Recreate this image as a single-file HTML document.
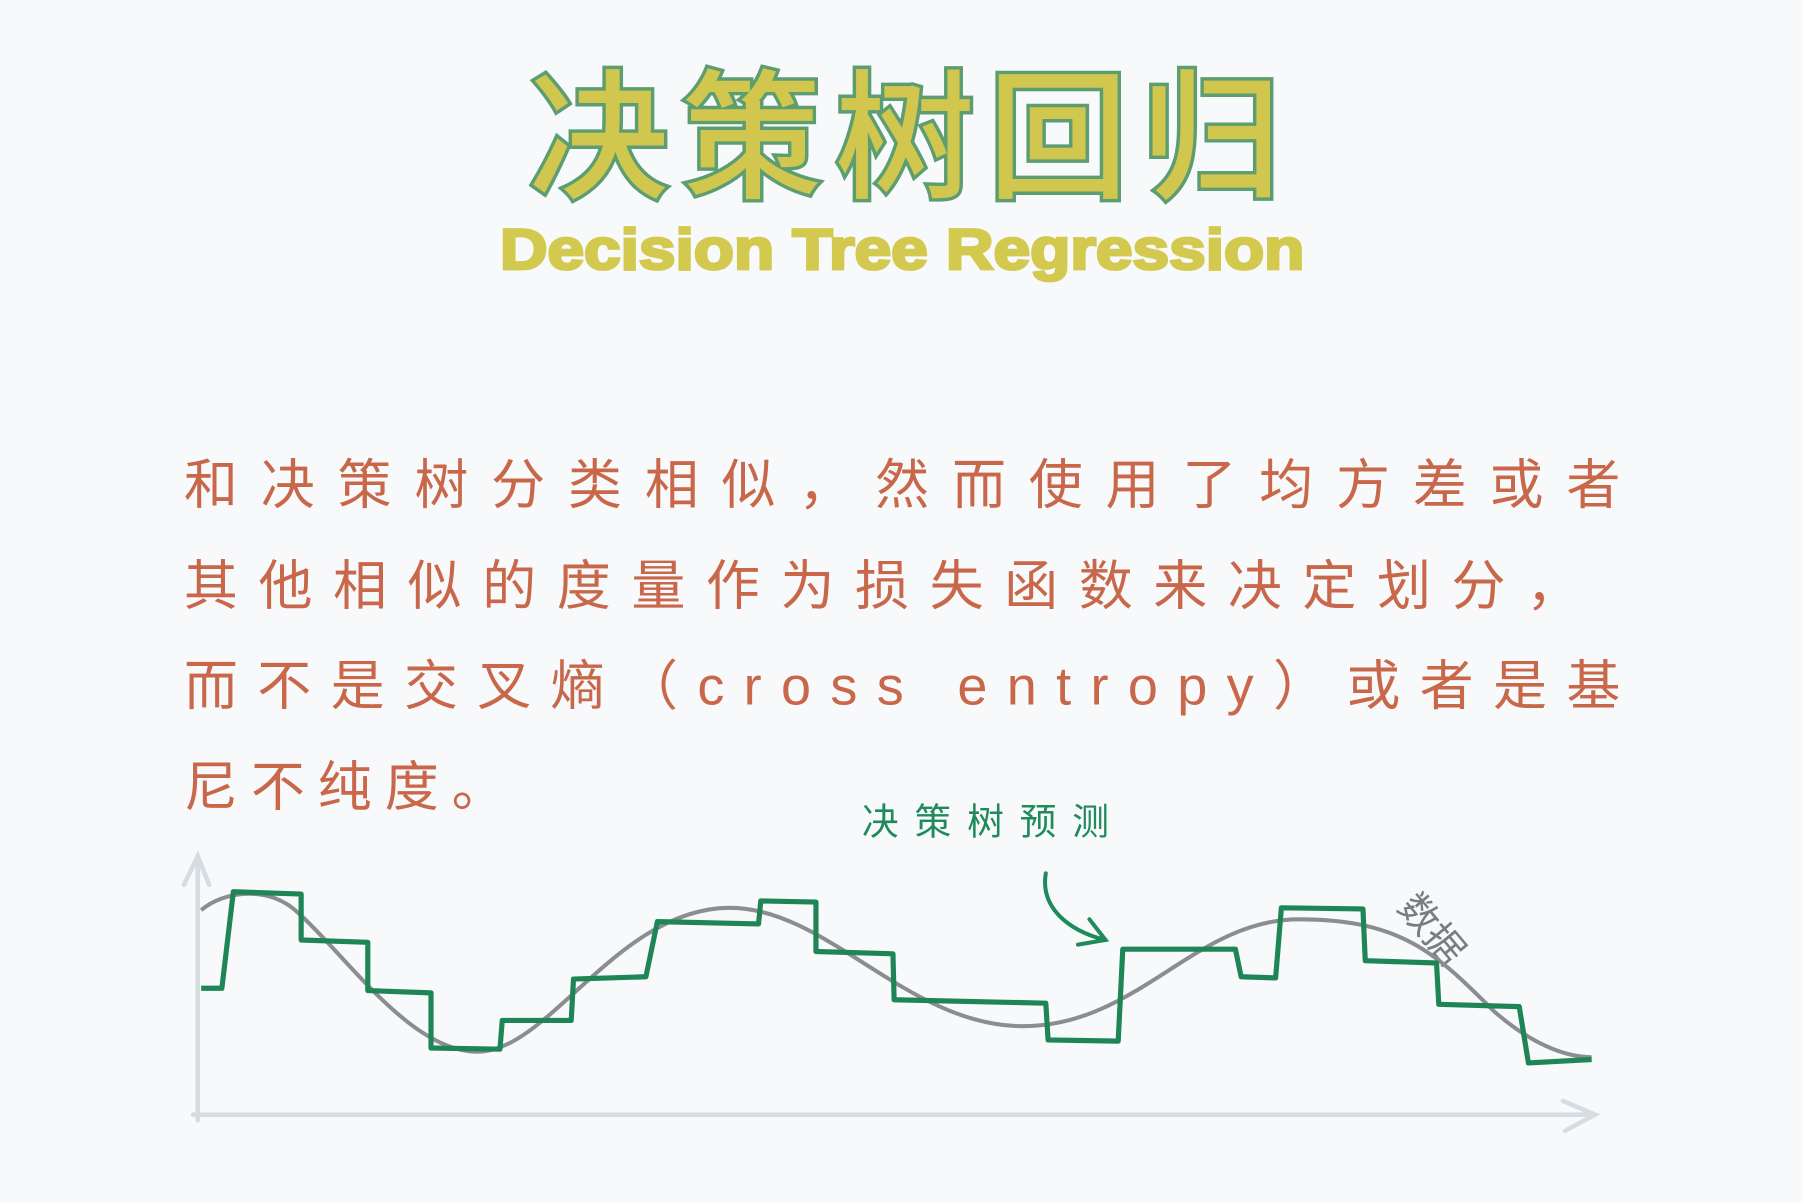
<!DOCTYPE html>
<html><head><meta charset="utf-8"><style>
html,body{margin:0;padding:0;background:#f8f9fa;}
svg{display:block;}
</style></head><body>
<svg width="1802" height="1202" viewBox="0 0 1568 1046" xmlns="http://www.w3.org/2000/svg">
<rect width="1568" height="1046" fill="#f8f9fa"/>
<text x="460" y="163" font-family="'Noto Sans CJK SC',sans-serif" font-weight="500" font-size="122" textLength="655" lengthAdjust="spacing" fill="#d1c64e" stroke="#5c9e72" stroke-width="6" paint-order="stroke" stroke-linejoin="miter">决策树回归</text>
<text x="435" y="234" font-family="'Liberation Sans',sans-serif" font-weight="bold" font-size="50" textLength="700" lengthAdjust="spacingAndGlyphs" fill="#d2c94e" stroke="#d2c94e" stroke-width="2.5">Decision Tree Regression</text>
<g font-family="'Liberation Sans','Noto Sans CJK SC',sans-serif" font-size="47" fill="#c8674a">
<text x="160" y="438" textLength="1250" lengthAdjust="spacing">和决策树分类相似，然而使用了均方差或者</text>
<text x="160" y="526" textLength="1215" lengthAdjust="spacing">其他相似的度量作为损失函数来决定划分，</text>
<text x="160" y="613" textLength="1250" lengthAdjust="spacing">而不是交叉熵（cross entropy）或者是基</text>
<text x="160" y="701" textLength="280" lengthAdjust="spacing">尼不纯度。</text>
</g>
<text x="750" y="726" font-family="'Noto Sans CJK SC',sans-serif" font-size="32" textLength="215" lengthAdjust="spacing" fill="#1f8a5c">决策树预测</text>
<path d="M910 760 C905 790 930 810 962 818 M948 800 L962 818 L938 822" fill="none" stroke="#1f8a5c" stroke-width="3.5" stroke-linecap="round"/>
<text transform="translate(1215,790) rotate(50)" font-family="'Noto Sans CJK SC',sans-serif" font-size="34" fill="#7a7c80">数据</text>
<path d="M172 745 L172 975 M160 770 L172 745 L182 770 M168 970 L1388 970 M1360 958 L1388 970 L1362 984" fill="none" stroke="#d5dde2" stroke-width="4" stroke-linecap="round"/>
<path d="M175 792 C195 775 235 770 260 795 C300 830 360 920 420 915 C480 910 540 790 635 790 C720 790 790 893 890 893 C990 893 1040 800 1130 800 C1220 800 1250 830 1300 880 C1340 915 1370 920 1385 920" fill="none" stroke="#8a8d91" stroke-width="3.5"/>
<path d="M175 860 L193 860 L203 776 L262 778 L262 818 L320 820 L320 862 L375 864 L375 912 L435 913 L437 888 L497 888 L499 852 L562 850 L572 802 L660 804 L662 784 L710 785 L710 828 L777 830 L778 870 L910 873 L912 905 L973 906 L977 826 L1075 826 L1080 850 L1110 851 L1115 790 L1186 791 L1188 836 L1250 838 L1252 874 L1322 876 L1330 925 L1385 922" fill="none" stroke="#1e8656" stroke-width="4.5" stroke-linejoin="round"/>
</svg>
</body></html>
